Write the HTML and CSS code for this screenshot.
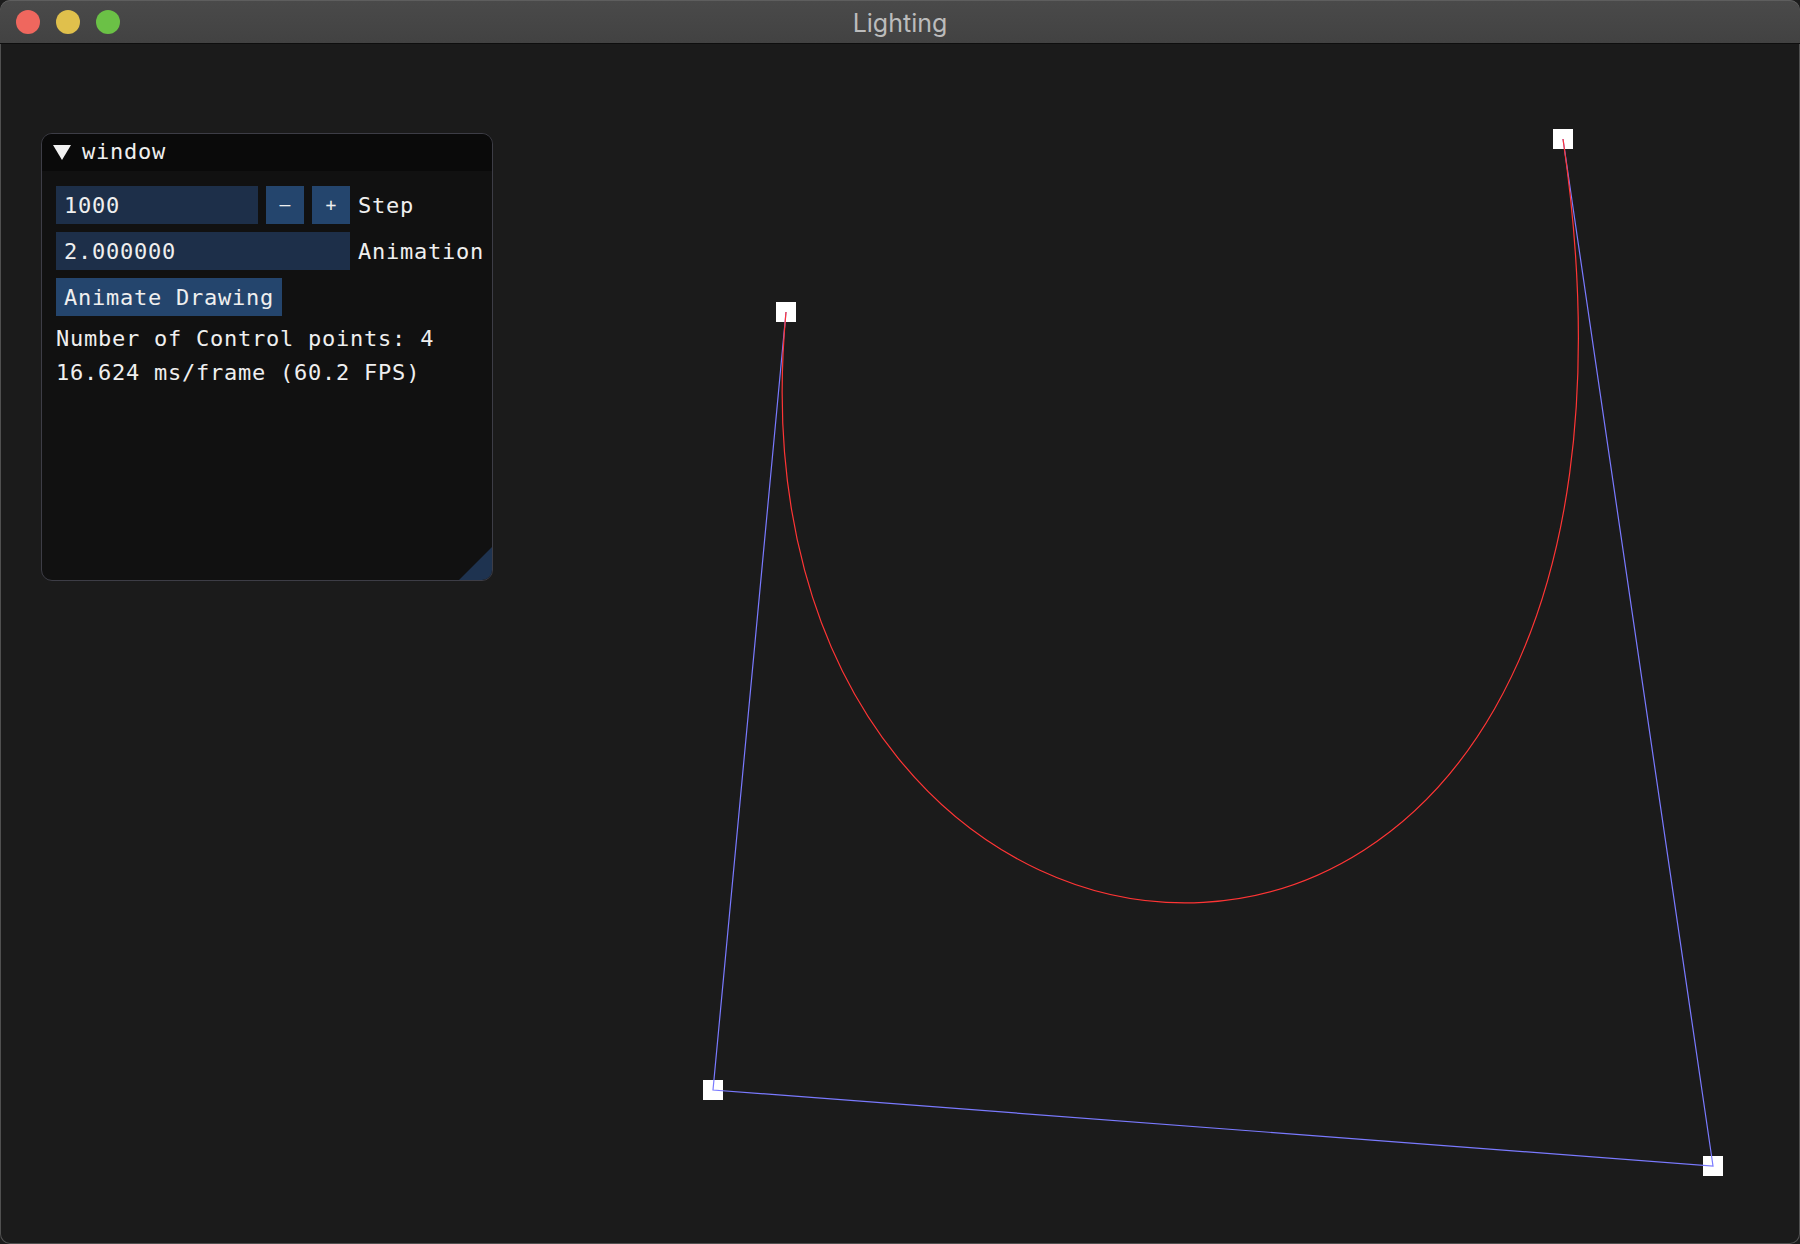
FILE: index.html
```html
<!DOCTYPE html>
<html>
<head>
<meta charset="utf-8">
<title>Lighting</title>
<link rel="stylesheet" href="styles.css">
</head>
<body>
<div class="mac">
  <div class="titlebar">
    <div class="lights">
      <span class="light red"></span>
      <span class="light yellow"></span>
      <span class="light green"></span>
    </div>
    <div class="title">Lighting</div>
  </div>
  <svg class="canvas" width="1800" height="1244" viewBox="0 0 1800 1244">
    <rect x="776" y="302" width="20" height="20" fill="#ffffff"/>
    <rect x="1553" y="129" width="20" height="20" fill="#ffffff"/>
    <rect x="703" y="1080" width="20" height="20" fill="#ffffff"/>
    <rect x="1703" y="1156" width="20" height="20" fill="#ffffff"/>
    <polyline points="786,312 713,1090 1713,1166 1563,139" fill="none" stroke="#7a7aff" stroke-width="1.2"/>
    <path d="M786 312 C713 1090 1713 1166 1563 139" fill="none" stroke="#ff3535" stroke-width="1.2"/>
  </svg>
  <div class="imgui">
    <div class="ig-title"><span class="tri"></span><span class="ig-name">window</span></div>
    <div class="ig-body">
      <div class="ig-row">
        <div class="frame frame-step">1000</div>
        <div class="btn btn-sq">–</div>
        <div class="btn btn-sq">+</div>
        <span class="label">Step</span>
      </div>
      <div class="ig-row">
        <div class="frame frame-anim">2.000000</div>
        <span class="label">Animation</span>
      </div>
      <div class="ig-row">
        <div class="btn btn-wide">Animate Drawing</div>
      </div>
      <div class="ig-text ig-first">Number of Control points: 4</div>
      <div class="ig-text">16.624 ms/frame (60.2 FPS)</div>
    </div>
    <div class="grip"></div>
  </div>
</div>
</body>
</html>
```

FILE: styles.css
```css
html, body {
  margin: 0;
  padding: 0;
  background: #1c1c1c;
}

.mac {
  position: relative;
  width: 1800px;
  height: 1244px;
  background: #1b1b1b;
  border-radius: 10px;
  box-shadow: inset 0 0 0 1px #505050;
  overflow: hidden;
}

.titlebar {
  position: relative;
  height: 43px;
  border-bottom: 1px solid #0e0e0e;
  background: linear-gradient(#4a4a4a, #424242);
  box-shadow: inset 0 1px 0 #5e5e5e;
  border-radius: 10px 10px 0 0;
  display: flex;
  align-items: center;
  justify-content: center;
}

.lights {
  position: absolute;
  left: 16px;
  top: 10px;
  display: flex;
  gap: 16px;
}

.light {
  width: 24px;
  height: 24px;
  border-radius: 50%;
  display: block;
}

.red { background: #ef675e; }
.yellow { background: #e0c04c; }
.green { background: #6bc146; }

.title {
  font-family: Inter, "Open Sans", sans-serif;
  font-size: 25px;
  color: #bcbcbc;
  padding-top: 2px;
}

.canvas {
  position: absolute;
  left: 0;
  top: 0;
}

.imgui {
  position: absolute;
  left: 41px;
  top: 133px;
  width: 452px;
  height: 448px;
  box-sizing: border-box;
  border: 1px solid #3d3d46;
  border-radius: 11px;
  background: #111111;
  overflow: hidden;
  font-family: "DejaVu Sans Mono", "Liberation Mono", monospace;
  font-size: 22px;
  letter-spacing: 0.76px;
  color: #efefef;
}

.ig-title {
  height: 37px;
  background: #0a0a0a;
  display: flex;
  align-items: center;
  padding-left: 11px;
  line-height: 26px;
}

.tri {
  width: 0;
  height: 0;
  border-left: 9px solid transparent;
  border-right: 9px solid transparent;
  border-top: 15px solid #f2f2f2;
  margin-right: 11px;
  margin-top: -1px;
}

.ig-name {
  margin-top: -2px;
}

.ig-body {
  padding: 15px 14px;
  display: flex;
  flex-direction: column;
  gap: 8px;
}

.ig-row {
  display: flex;
  align-items: center;
  gap: 8px;
  height: 38px;
}

.frame {
  flex-shrink: 0;
  height: 38px;
  box-sizing: border-box;
  padding: 7px 8px 5px;
  line-height: 26px;
  background: #1d2f49;
  white-space: nowrap;
}

.frame-step { width: 202px; }
.frame-anim { width: 294px; }

.btn {
  flex-shrink: 0;
  height: 38px;
  box-sizing: border-box;
  line-height: 26px;
  background: #24456d;
  white-space: nowrap;
}

.btn-sq {
  width: 38px;
  display: flex;
  align-items: center;
  justify-content: center;
  letter-spacing: 0;
  font-size: 18px;
}

.btn-wide {
  padding: 7px 8px 5px;
  width: 226px;
}

.label {
  flex-shrink: 0;
  line-height: 26px;
  padding-top: 2px;
  white-space: nowrap;
}

.ig-text {
  line-height: 26px;
  white-space: nowrap;
}

.ig-first {
  margin-top: 2px;
}

.grip {
  position: absolute;
  right: 0;
  bottom: 0;
  width: 33px;
  height: 33px;
  background: #1e3350;
  clip-path: polygon(100% 0, 100% 100%, 0 100%);
}
```
